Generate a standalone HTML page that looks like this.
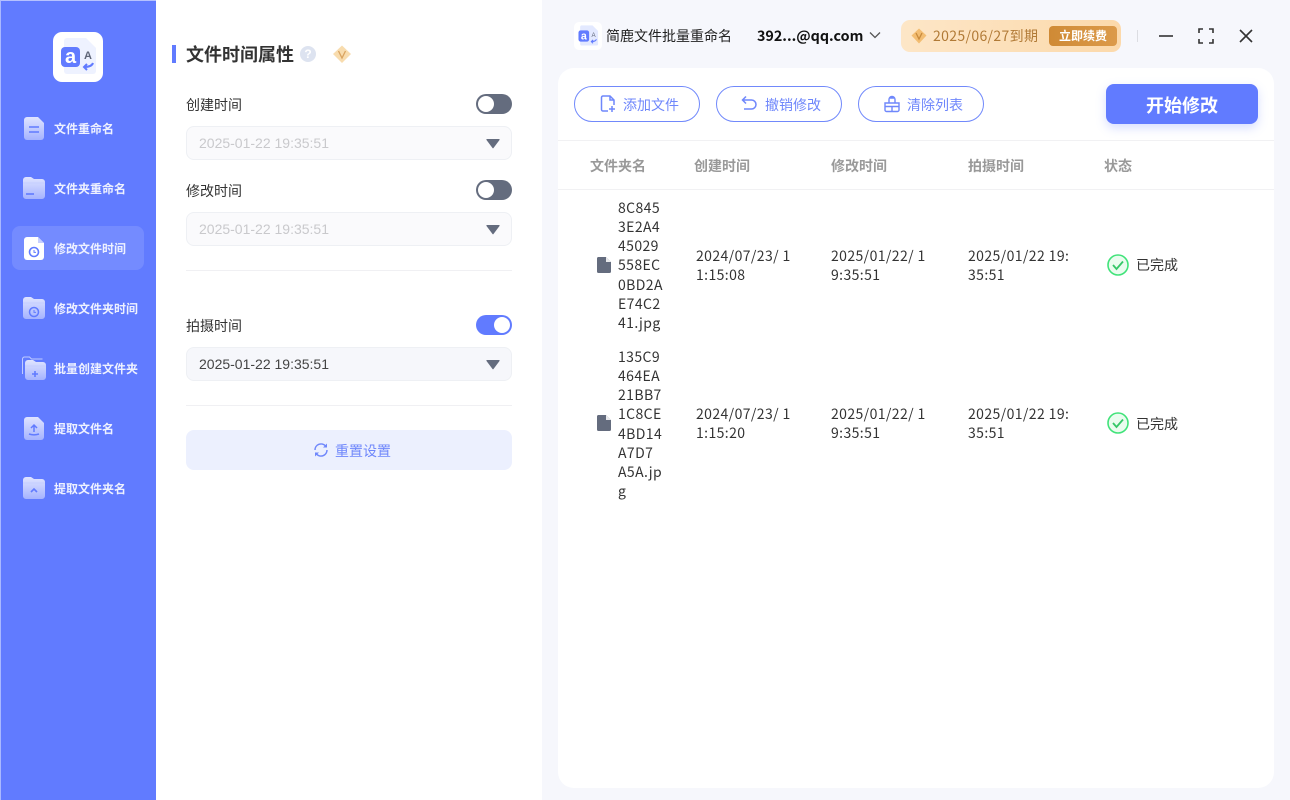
<!DOCTYPE html>
<html lang="zh"><head><meta charset="utf-8"><title>简鹿文件批量重命名</title>
<style>
*{box-sizing:border-box;margin:0;padding:0}
html,body{width:1290px;height:800px;overflow:hidden;background:#fff}
body{position:relative;font-family:"Liberation Sans","Noto Sans CJK SC",sans-serif;color:#333}
.a{position:absolute}
.cjk{font-family:"Noto Sans CJK SC","Liberation Sans",sans-serif}
.nav{position:absolute;left:54px;font:bold 12px/16px "Noto Sans CJK SC",sans-serif;color:#eef1ff;white-space:nowrap}
.ic{position:absolute;left:20px;width:28px;height:28px}
.lb{position:absolute;left:186px;font:14px/18px "Noto Sans CJK SC",sans-serif;color:#333;white-space:nowrap}
.sw{position:absolute;left:476px;width:36px;height:20px;border-radius:10px;background:#646c7e}
.sw i{position:absolute;left:2px;top:2px;width:16px;height:16px;border-radius:50%;background:#fff}
.sw.on{background:#617bff}.sw.on i{left:18px}
.sel{position:absolute;left:186px;width:326px;height:34px;border-radius:8px;border:1px solid #eef0f4;background:#f6f7fb;font:14px/32px "Liberation Sans",sans-serif;color:#444;padding-left:12px}
.sel.off{background:#fafafc;color:#c9c9cc}
.sel svg{position:absolute;left:299px;top:11px}
.hr{position:absolute;left:186px;width:326px;height:1px;background:#f0f0f3}
.btn{position:absolute;top:86px;height:36px;border:1px solid #7189fb;border-radius:18px;background:#fff;font:14px/38px "Noto Sans CJK SC",sans-serif;color:#6f87fb;white-space:nowrap}
.btn span{position:absolute;top:-1px}
.btn svg{position:absolute;top:8px}
.th{position:absolute;top:157px;font:bold 14px/18px "Noto Sans CJK SC",sans-serif;color:#999;white-space:nowrap}
.td{position:absolute;font:14px/19.15px "Noto Sans CJK SC",sans-serif;letter-spacing:.4px;color:#333;white-space:nowrap}
.st{position:absolute;left:1136px;font:14px/18px "Noto Sans CJK SC",sans-serif;color:#333;white-space:nowrap}
</style></head><body>

<div class="a" style="left:0;top:0;width:156px;height:800px;background:#617bff;border-left:1px solid #a9b8ff;border-top:1px solid #b5c1ff"></div>
<div class="a" style="left:53px;top:32px;width:50px;height:50px;background:#fff;border-radius:9px"></div>
<svg class="a" style="left:53px;top:32px" width="50" height="50" viewBox="0 0 50 50">
<path d="M14 6h19l10 10v23a3 3 0 0 1-3 3H14a3 3 0 0 1-3-3V9a3 3 0 0 1 3-3z" fill="#eef2ff"/>
<rect x="8" y="15" width="19" height="20" rx="4" fill="#617bff"/>
<text x="17.5" y="31" text-anchor="middle" font-family="Liberation Sans" font-weight="bold" font-size="20" fill="#fff">a</text>
<text x="35" y="27" text-anchor="middle" font-family="Liberation Sans" font-weight="bold" font-size="11" fill="#5f6678">A</text>
<path d="M40 31c-1 3-4 4-9 4m3-3l-3 3 3 3" fill="none" stroke="#617bff" stroke-width="2"/>
</svg>

<div class="a" style="left:12px;top:226px;width:132px;height:44px;border-radius:8px;background:#748bff"></div>

<svg class="ic" style="top:114px" viewBox="0 0 28 28"><defs><linearGradient id="g" x1="0" y1="0" x2="0" y2="1"><stop offset="0" stop-color="#dfe4ff"/><stop offset="1" stop-color="#a5b3ff"/></linearGradient></defs>
<path d="M7 3h11l6 6v14a3 3 0 0 1-3 3H7a3 3 0 0 1-3-3V6a3 3 0 0 1 3-3z" fill="url(#g)"/><path d="M9 13h10M9 18h10" stroke="#617bff" stroke-width="1.600"/></svg>
<div class="nav" style="top:121px">文件重命名</div>

<svg class="ic" style="top:174px" viewBox="0 0 28 28"><path d="M6 3h5l3 2h8a3 3 0 0 1 3 3v14a3 3 0 0 1-3 3H6a3 3 0 0 1-3-3V6a3 3 0 0 1 3-3z" fill="url(#g)"/><path d="M3 9h22" stroke="#c5ceff"/><path d="M6 20h8" stroke="#617bff" stroke-width="1.600"/></svg>
<div class="nav" style="top:181px">文件夹重命名</div>

<svg class="ic" style="top:234px" viewBox="0 0 28 28"><path d="M7 3h11l6 6v14a3 3 0 0 1-3 3H7a3 3 0 0 1-3-3V6a3 3 0 0 1 3-3z" fill="#fff"/><path d="M18 3l6 6h-6z" fill="#c6cfff"/><circle cx="14" cy="18" r="4.500" fill="none" stroke="#617bff" stroke-width="1.600"/><path d="M14 16v2.400h2" fill="none" stroke="#617bff"/></svg>
<div class="nav" style="top:241px">修改文件时间</div>

<svg class="ic" style="top:294px" viewBox="0 0 28 28"><path d="M6 3h5l3 2h8a3 3 0 0 1 3 3v14a3 3 0 0 1-3 3H6a3 3 0 0 1-3-3V6a3 3 0 0 1 3-3z" fill="url(#g)"/><path d="M3 9h22" stroke="#c5ceff"/><circle cx="14" cy="18" r="4.500" fill="none" stroke="#617bff" stroke-width="1.500"/><path d="M14 16v2.400h2" fill="none" stroke="#617bff"/></svg>
<div class="nav" style="top:301px">修改文件夹时间</div>

<svg class="ic" style="top:354px" viewBox="0 0 28 28"><path d="M2.500 20V5a2 2 0 0 1 2-2h5l2 2h11" fill="none" stroke="#c0cbff"/><path d="M8 6h5l3 2h7a3 3 0 0 1 3 3v12a3 3 0 0 1-3 3H8a3 3 0 0 1-3-3V9a3 3 0 0 1 3-3z" fill="url(#g)"/><path d="M5 12h21" stroke="#c5ceff"/><path d="M12 20h6M15 17v6" stroke="#617bff" stroke-width="1.600"/></svg>
<div class="nav" style="top:361px">批量创建文件夹</div>

<svg class="ic" style="top:414px" viewBox="0 0 28 28"><path d="M7 3h11l6 6v14a3 3 0 0 1-3 3H7a3 3 0 0 1-3-3V6a3 3 0 0 1 3-3z" fill="url(#g)"/><path d="M14 18v-7m-3 3l3-3 3 3M9 20c3 1 7 1 10 0" fill="none" stroke="#617bff" stroke-width="1.500"/></svg>
<div class="nav" style="top:421px">提取文件名</div>

<svg class="ic" style="top:474px" viewBox="0 0 28 28"><path d="M6 3h5l3 2h8a3 3 0 0 1 3 3v14a3 3 0 0 1-3 3H6a3 3 0 0 1-3-3V6a3 3 0 0 1 3-3z" fill="url(#g)"/><path d="M3 9h22" stroke="#c5ceff"/><path d="M11 18l3-3 3 3" fill="none" stroke="#617bff" stroke-width="1.600"/></svg>
<div class="nav" style="top:481px">提取文件夹名</div>

<!-- left settings -->
<div class="a" style="left:172px;top:45px;width:4px;height:18px;background:#617bff"></div>
<div class="a cjk" style="left:186px;top:41px;font-size:18px;line-height:26px;font-weight:bold;color:#333;white-space:nowrap">文件时间属性</div>
<div class="a" style="left:300px;top:46px;width:16px;height:16px;border-radius:50%;background:#dde3f0;color:#fff;font:bold 12px/16px 'Liberation Sans';text-align:center">?</div>
<svg class="a" style="left:331px;top:44px" width="22" height="22" viewBox="0 0 22 22"><path d="M11 1.500l9 8.500-9 9-9-9z" fill="#f8dcae"/><path d="M7.500 7l3.500 7 3.500-7" fill="none" stroke="#d9a360" stroke-width="1.300"/></svg>

<div class="lb" style="top:96px">创建时间</div>
<div class="sw" style="top:94px"><i></i></div>
<div class="sel off" style="top:126px">2025-01-22 19:35:51<svg width="14" height="11" viewBox="0 0 14 11"><path d="M1 1h12a.6.6 0 0 1 .5 1L7.500 10a.6.6 0 0 1-1 0L.5 2A.6.6 0 0 1 1 1z" fill="#646c7e"/></svg></div>
<div class="lb" style="top:182px">修改时间</div>
<div class="sw" style="top:180px"><i></i></div>
<div class="sel off" style="top:212px">2025-01-22 19:35:51<svg width="14" height="11" viewBox="0 0 14 11"><path d="M1 1h12a.6.6 0 0 1 .5 1L7.500 10a.6.6 0 0 1-1 0L.5 2A.6.6 0 0 1 1 1z" fill="#646c7e"/></svg></div>
<div class="hr" style="top:270px"></div>
<div class="lb" style="top:317px">拍摄时间</div>
<div class="sw on" style="top:315px"><i></i></div>
<div class="sel" style="top:347px">2025-01-22 19:35:51<svg width="14" height="11" viewBox="0 0 14 11"><path d="M1 1h12a.6.6 0 0 1 .5 1L7.500 10a.6.6 0 0 1-1 0L.5 2A.6.6 0 0 1 1 1z" fill="#646c7e"/></svg></div>
<div class="hr" style="top:405px"></div>
<div class="a" style="left:186px;top:430px;width:326px;height:40px;border-radius:8px;background:#ecf0fe"></div>
<svg class="a" style="left:313px;top:442px" width="16" height="16" viewBox="0 0 16 16"><path d="M2 8a6 6 0 0 1 10.500-4M14 8a6 6 0 0 1-10.500 4" fill="none" stroke="#6f87fb" stroke-width="1.500"/><path d="M14 1.500v4h-4zM2 14.500v-4h4z" fill="#6f87fb"/></svg>
<div class="a cjk" style="left:335px;top:441px;font-size:14px;line-height:20px;color:#6f87fb;white-space:nowrap">重置设置</div>

<!-- right -->
<div class="a" style="left:542px;top:0;width:748px;height:800px;background:#f6f7fc"></div>
<div class="a" style="left:558px;top:68px;width:716px;height:720px;border-radius:16px;background:#fff"></div>

<div class="a" style="left:574px;top:22px;width:28px;height:28px;border-radius:5px;background:#fff"></div>
<svg class="a" style="left:574px;top:22px" width="28" height="28" viewBox="0 0 50 50"><path d="M14 6h19l10 10v23a3 3 0 0 1-3 3H14a3 3 0 0 1-3-3V9a3 3 0 0 1 3-3z" fill="#e3e9ff"/><rect x="8" y="15" width="19" height="20" rx="4" fill="#617bff"/><text x="17.500" y="31" text-anchor="middle" font-family="Liberation Sans" font-weight="bold" font-size="19" fill="#fff">a</text><text x="35" y="27" text-anchor="middle" font-family="Liberation Sans" font-size="11" fill="#5f6678">A</text><path d="M40 31c-1 3-4 4-9 4m3-3l-3 3 3 3" fill="none" stroke="#617bff" stroke-width="2"/></svg>
<div class="a cjk" style="left:606px;top:26px;font-size:14px;line-height:20px;color:#222;white-space:nowrap">简鹿文件批量重命名</div>
<div class="a cjk" style="left:757px;top:26px;font-size:14.300px;line-height:20px;font-weight:bold;color:#111;white-space:nowrap">392...@qq.com</div>
<svg class="a" style="left:869px;top:31px" width="12" height="9" viewBox="0 0 12 9"><path d="M1 1.500l5 5 5-5" fill="none" stroke="#555" stroke-width="1.300"/></svg>

<div class="a" style="left:901px;top:20px;width:220px;height:32px;border-radius:9px;background:linear-gradient(90deg,#fde6c7,#fcd9ab)"></div>
<svg class="a" style="left:910px;top:27px" width="18" height="18" viewBox="0 0 18 18"><path d="M9 1.500l7.500 7-7.500 8-7.500-8z" fill="#f3bd72"/><path d="M6 6l3 6 3-6" fill="none" stroke="#c88a3c" stroke-width="1.300"/></svg>
<div class="a" style="left:933px;top:26px;font:14px/20px 'Noto Sans CJK SC',sans-serif;color:#b17a36;white-space:nowrap;letter-spacing:.35px">2025/06/27到期</div>
<div class="a cjk" style="left:1049px;top:26px;width:68px;height:20px;border-radius:4px;background:linear-gradient(90deg,#cf8a35,#dc9a4a);color:#fff;font-size:12px;font-weight:bold;line-height:20px;text-align:center">立即续费</div>
<div class="a" style="left:1137px;top:30px;width:1px;height:12px;background:#dcdde2"></div>
<svg class="a" style="left:1158px;top:28px" width="16" height="16"><path d="M1 8h14" stroke="#333" stroke-width="1.600"/></svg>
<svg class="a" style="left:1198px;top:28px" width="16" height="16" viewBox="0 0 16 16"><path d="M1 5V1h4M11 1h4v4M15 11v4h-4M5 15H1v-4" fill="none" stroke="#333" stroke-width="1.600"/></svg>
<svg class="a" style="left:1238px;top:28px" width="16" height="16" viewBox="0 0 16 16"><path d="M2 2l12 12M14 2L2 14" fill="none" stroke="#333" stroke-width="1.600"/></svg>

<div class="btn" style="left:574px;width:126px"><svg style="left:24px" width="18" height="18" viewBox="0 0 18 18"><path d="M9 16H4a1.500 1.500 0 0 1-1.500-1.500v-12A1.500 1.500 0 0 1 4 1h7l4 4v5" fill="none" stroke="#6f87fb" stroke-width="1.500"/><path d="M11 1v4h4M13 11v6M10 14h6" fill="none" stroke="#6f87fb" stroke-width="1.500"/></svg><span style="left:48px">添加文件</span></div>
<div class="btn" style="left:716px;width:126px"><svg style="left:23px" width="18" height="18" viewBox="0 0 18 18"><path d="M6 1.500L2.500 5 6 8.500M3 5h8.500a4.500 4.500 0 0 1 0 9H4" fill="none" stroke="#6f87fb" stroke-width="1.500"/></svg><span style="left:48px">撤销修改</span></div>
<div class="btn" style="left:858px;width:126px"><svg style="left:24px" width="18" height="18" viewBox="0 0 18 18"><path d="M2 8h14v7a1.500 1.500 0 0 1-1.500 1.500h-11A1.500 1.500 0 0 1 2 15zM6 8V4.500a3 3 0 0 1 6 0V8M2 11.500h14M9 11.500v5M7 3h4" fill="none" stroke="#6f87fb" stroke-width="1.400"/></svg><span style="left:48px">清除列表</span></div>
<div class="a cjk" style="left:1106px;top:84px;width:152px;height:40px;border-radius:8px;background:#617bff;box-shadow:0 4px 10px rgba(97,123,255,.25);color:#fff;font-size:18px;font-weight:bold;line-height:43px;text-align:center">开始修改</div>

<div class="a" style="left:558px;top:140px;width:716px;height:1px;background:#f1f1f3"></div>
<div class="a" style="left:558px;top:189px;width:716px;height:1px;background:#f1f1f3"></div>
<div class="th" style="left:590px">文件夹名</div>
<div class="th" style="left:694px">创建时间</div>
<div class="th" style="left:831px">修改时间</div>
<div class="th" style="left:968px">拍摄时间</div>
<div class="th" style="left:1104px">状态</div>

<svg class="a" style="left:597px;top:257px" width="14" height="16" viewBox="0 0 14 16"><path d="M2 0h7l5 5v9.500a1.500 1.500 0 0 1-1.500 1.500h-11A1.500 1.500 0 0 1 0 14.500v-13A1.500 1.500 0 0 1 2 0z" fill="#646c7e"/><path d="M9 0v5h5z" fill="#fff" opacity=".85"/></svg>
<div class="td" style="left:618px;top:199px">8C845<br>3E2A4<br>45029<br>558EC<br>0BD2A<br>E74C2<br>41.jpg</div>
<div class="td" style="left:696px;top:247px">2024/07/23/ 1<br>1:15:08</div>
<div class="td" style="left:831px;top:247px">2025/01/22/ 1<br>9:35:51</div>
<div class="td" style="left:968px;top:247px">2025/01/22 19:<br>35:51</div>
<svg class="a" style="left:1107px;top:254px" width="22" height="22" viewBox="0 0 22 22"><circle cx="11" cy="11" r="10" fill="#eafcef" stroke="#41e37a" stroke-width="1.600"/><path d="M6 11l3.500 4L16 7.500" fill="none" stroke="#35c768" stroke-width="1.800"/></svg>
<div class="st" style="top:256px">已完成</div>

<svg class="a" style="left:597px;top:415px" width="14" height="16" viewBox="0 0 14 16"><path d="M2 0h7l5 5v9.500a1.500 1.500 0 0 1-1.500 1.500h-11A1.500 1.500 0 0 1 0 14.500v-13A1.500 1.500 0 0 1 2 0z" fill="#646c7e"/><path d="M9 0v5h5z" fill="#fff" opacity=".85"/></svg>
<div class="td" style="left:618px;top:348px">135C9<br>464EA<br>21BB7<br>1C8CE<br>4BD14<br>A7D7<br>A5A.jp<br>g</div>
<div class="td" style="left:696px;top:405px">2024/07/23/ 1<br>1:15:20</div>
<div class="td" style="left:831px;top:405px">2025/01/22/ 1<br>9:35:51</div>
<div class="td" style="left:968px;top:405px">2025/01/22 19:<br>35:51</div>
<svg class="a" style="left:1107px;top:412px" width="22" height="22" viewBox="0 0 22 22"><circle cx="11" cy="11" r="10" fill="#eafcef" stroke="#41e37a" stroke-width="1.600"/><path d="M6 11l3.500 4L16 7.500" fill="none" stroke="#35c768" stroke-width="1.800"/></svg>
<div class="st" style="top:415px">已完成</div>
</body></html>
